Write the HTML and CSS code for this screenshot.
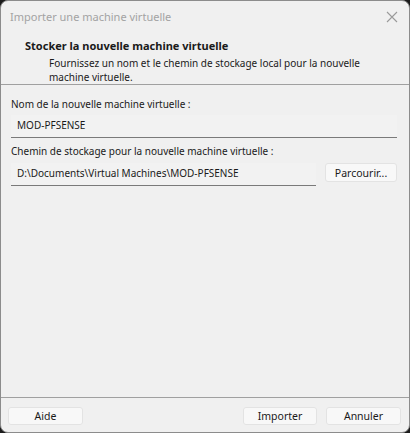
FILE: index.html
```html
<!DOCTYPE html>
<html lang="fr">
<head>
<meta charset="utf-8">
<title>Importer une machine virtuelle</title>
<link rel="stylesheet" href="styles.css">
</head>
<body>
<div class="window">
  <div class="titlebar">
    <span class="title">Importer une machine virtuelle</span>
    <svg class="close" width="12" height="12" viewBox="0 0 12 12"><path d="M1 1L11 11M11 1L1 11" stroke="#9a9a9a" stroke-width="1.1" fill="none"/></svg>
  </div>
  <div class="header">
    <div class="heading">Stocker la nouvelle machine virtuelle</div>
    <div class="subheading">Fournissez un nom et le chemin de stockage local pour la nouvelle<br>machine virtuelle.</div>
  </div>
  <div class="content">
    <label class="label">Nom de la nouvelle machine virtuelle :</label>
    <div class="field">MOD-PFSENSE</div>
    <label class="label second">Chemin de stockage pour la nouvelle machine virtuelle :</label>
    <div class="row">
      <div class="field grow">D:\Documents\Virtual Machines\MOD-PFSENSE</div>
      <button class="btn browse">Parcourir...</button>
    </div>
  </div>
  <div class="footer">
    <button class="btn">Aide</button>
    <div class="spacer"></div>
    <button class="btn narrow">Importer</button>
    <button class="btn">Annuler</button>
  </div>
</div>
</body>
</html>
```
FILE: styles.css
```css
html, body {
  margin: 0;
  padding: 0;
  background: #1c1c1c;
}
body {
  width: 410px;
  height: 433px;
  font-family: "Segoe UI", "Noto Sans", sans-serif;
  font-size: 10px;
  color: #1a1a1a;
}
.window {
  box-sizing: border-box;
  width: 410px;
  height: 433px;
  background: #f0f0f0;
  border: 1px solid #8c8c8c;
  border-radius: 8px;
  display: flex;
  flex-direction: column;
  overflow: hidden;
}
.titlebar {
  height: 31px;
  display: flex;
  align-items: center;
  padding: 0 10px 0 9px;
  flex: none;
}
.title {
  flex: 1;
  color: #a3a3a3;
  font-size: 11px;
}
.close {
  margin-right: 1px;
}
.header {
  padding: 6px 10px 5px 24px;
  border-bottom: 1px solid #a0a0a0;
  height: 41px;
  flex: none;
  white-space: nowrap;
}
.heading {
  font-weight: bold;
  font-size: 11px;
  line-height: 16px;
}
.subheading {
  padding-left: 24px;
  line-height: 14px;
  margin-top: 2px;
}
.content {
  flex: 1;
  padding: 11px 12px 0 10px;
  display: flex;
  flex-direction: column;
}
.label {
  line-height: 16px;
}
.second {
  margin-top: 5px;
}
.field {
  margin-top: 3px;
  height: 23px;
  line-height: 21px;
  padding-left: 6px;
  border-bottom: 1px solid #7a7a7a;
  box-sizing: border-box;
  background: #f2f2f2;
}
.row {
  display: flex;
  align-items: flex-start;
  gap: 9px;
  margin-top: 1px;
}
.grow {
  flex: 1;
}
.btn {
  box-sizing: border-box;
  font-family: inherit;
  font-size: 10.5px;
  color: #1a1a1a;
  background: #f8f8f8;
  border: 1px solid #e3e3e3;
  border-radius: 3px;
  height: 18px;
  padding: 0;
  width: 75px;
  line-height: 16px;
}
.narrow {
  width: 74px;
}
.browse {
  margin-top: 3px;
  width: 72px;
  height: 19px;
}
.footer {
  flex: none;
  height: 35px;
  border-top: 1px solid #a0a0a0;
  display: flex;
  align-items: flex-start;
  padding: 9px 8px 0 7px;
  box-sizing: border-box;
  gap: 9px;
}
.spacer {
  flex: 1;
}
```
